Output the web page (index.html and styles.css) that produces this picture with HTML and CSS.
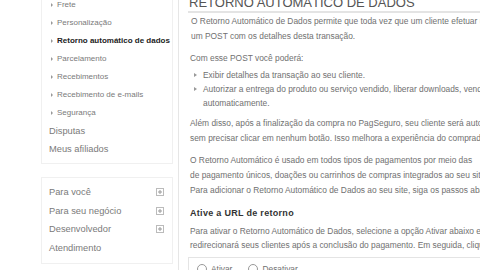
FILE: index.html
```html
<!DOCTYPE html>
<html lang="pt-BR">
<head>
<meta charset="utf-8">
<link rel="stylesheet" href="styles.css">
</head>
<body>
<div class="page">
  <aside class="sidebar">
    <div class="panel panel-top">
      <ul class="sub">
        <li>Frete</li>
        <li>Personalização</li>
        <li class="active">Retorno automático de dados</li>
        <li>Parcelamento</li>
        <li>Recebimentos</li>
        <li>Recebimento de e-mails</li>
        <li>Segurança</li>
      </ul>
      <ul class="main-links">
        <li>Disputas</li>
        <li>Meus afiliados</li>
      </ul>
    </div>
    <div class="panel panel-bottom">
      <ul class="main-links">
        <li><span>Para você</span><svg class="plus" viewBox="0 0 8 8"><rect x="0.5" y="0.5" width="7" height="7" fill="none" stroke="#bbb"/><path d="M4 2v4M2 4h4" stroke="#999"/></svg></li>
        <li><span>Para seu negócio</span><svg class="plus" viewBox="0 0 8 8"><rect x="0.5" y="0.5" width="7" height="7" fill="none" stroke="#bbb"/><path d="M4 2v4M2 4h4" stroke="#999"/></svg></li>
        <li><span>Desenvolvedor</span><svg class="plus" viewBox="0 0 8 8"><rect x="0.5" y="0.5" width="7" height="7" fill="none" stroke="#bbb"/><path d="M4 2v4M2 4h4" stroke="#999"/></svg></li>
        <li><span>Atendimento</span></li>
      </ul>
    </div>
  </aside>
  <main class="content">
    <h1 class="title">RETORNO AUTOMÁTICO DE DADOS</h1>
    <p class="p1">O Retorno Automático de Dados permite que toda vez que um cliente efetuar uma compra, o PagSeguro envie para o seu site<br>um POST com os detalhes desta transação.</p>
    <p class="p2">Com esse POST você poderá:</p>
    <ul class="bullets">
      <li>Exibir detalhes da transação ao seu cliente.</li>
      <li>Autorizar a entrega do produto ou serviço vendido, liberar downloads, vender<br>automaticamente.</li>
    </ul>
    <p class="p3">Além disso, após a finalização da compra no PagSeguro, seu cliente será automaticamente redirecionado<br>sem precisar clicar em nenhum botão. Isso melhora a experiência do comprador.</p>
    <p class="p4">O Retorno Automático é usado em todos tipos de pagamentos por meio das<br>de pagamento únicos, doações ou carrinhos de compras integrados ao seu site.</p>
    <p class="p5">Para adicionar o Retorno Automático de Dados ao seu site, siga os passos abaixo.</p>
    <h2 class="subtitle">Ative a URL de retorno</h2>
    <p class="p6">Para ativar o Retorno Automático de Dados, selecione a opção Ativar abaixo e informe<br>redirecionará seus clientes após a conclusão do pagamento. Em seguida, clique em salvar.</p>
    <div class="option-box">
      <label class="radio"><span class="circle"></span>Ativar</label>
      <label class="radio"><span class="circle"></span>Desativar</label>
    </div>
  </main>
</div>
</body>
</html>
```
FILE: styles.css
```css
html, body {
  margin: 0;
  padding: 0;
  background: #fff;
  overflow: hidden;
  width: 480px;
  height: 270px;
}
body {
  font-family: "Liberation Sans", Arial, sans-serif;
  color: #707070;
}
ul { list-style: none; margin: 0; padding: 0; }
p, h1, h2 { margin: 0; }

.page {
  display: flex;
  margin-top: -10px;
  padding-left: 41px;
}
.sidebar {
  width: 132px;
  flex: none;
  display: flex;
  flex-direction: column;
  gap: 13px;
}
.panel {
  border: 1px solid #f0f0f0;
  padding: 5px 6px 5px 7px;
}
.panel-bottom { padding-bottom: 6px; }
.sub li {
  font-size: 8px;
  line-height: 18px;
  color: #7a7a7a;
  padding-left: 2px;
  display: flex;
  align-items: center;
  white-space: nowrap;
}
.sub li::before {
  content: "";
  width: 0;
  height: 0;
  border-left: 2px solid #999;
  border-top: 2px solid transparent;
  border-bottom: 2px solid transparent;
  margin-right: 4px;
}
.sub li.active { color: #222; font-weight: bold; }
.main-links li {
  font-size: 9.3px;
  line-height: 18px;
  color: #7a7a7a;
  display: flex;
  justify-content: space-between;
  align-items: center;
}
.panel-bottom .main-links li { line-height: 18.5px; }
.plus { width: 8px; height: 8px; margin-right: 2px; }

.content {
  flex: none;
  width: 400px;
  margin-left: 5px;
  border-left: 1px solid #e6e6e6;
  padding-left: 11px;
  min-height: 300px;
  font-size: 8.4px;
  color: #707070;
  white-space: nowrap;
}
.title {
  font-size: 13px;
  font-weight: normal;
  color: #555;
  line-height: 16px;
  padding-top: 5px;
  padding-left: 1px;
  border-bottom: 2px solid #e4e4e4;
  margin-left: -2px;
}
.content p { line-height: 15px; }
.p1 { margin-top: 1px; padding-left: 1px; }
.p2 { margin-top: 7px; }
.bullets { margin-top: 2px; }
.bullets li {
  line-height: 14px;
  padding-left: 13px;
  position: relative;
}
.bullets li::before {
  content: "";
  position: absolute;
  left: 4px;
  top: 5px;
  border-left: 3px solid #999;
  border-top: 2px solid transparent;
  border-bottom: 2px solid transparent;
}
.content .p3 { margin-top: 6px; }
.content .p4 { margin-top: 7px; }
.content .p5 { margin-top: 0; }
.subtitle {
  font-size: 9px;
  font-weight: bold;
  color: #333;
  line-height: 16px;
  margin-top: 7px;
  letter-spacing: 0.3px;
}
.content .p6 { margin-top: 3px; line-height: 14px; }
.option-box {
  margin-top: 5px;
  margin-left: -2px;
  border: 1px solid #e4e4e4;
  padding: 6px 8px;
  display: flex;
  gap: 16px;
  height: 30px;
}
.radio {
  display: flex;
  align-items: center;
  gap: 4px;
  color: #707070;
  height: 10px;
}
.circle {
  width: 8px;
  height: 8px;
  border: 1px solid #999;
  border-radius: 50%;
}
```
